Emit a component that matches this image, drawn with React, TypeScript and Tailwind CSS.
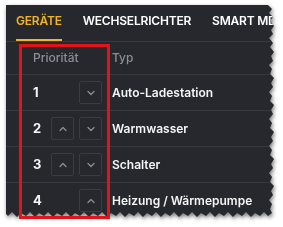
import { ChevronDown, ChevronUp } from "lucide-react";

const rows = [
  { prio: 1, name: "Auto-Ladestation", first: null, second: "down" },
  { prio: 2, name: "Warmwasser", first: "up", second: "down" },
  { prio: 3, name: "Schalter", first: "up", second: "down" },
  { prio: 4, name: "Heizung / Wärmepumpe", first: null, second: "up" },
] as const;

function MoveButton({ dir }: { dir: "up" | "down" }) {
  return (
    <button className="flex h-[23px] w-[23px] items-center justify-center rounded-[2px] border border-[#3a3c42] text-[#8c8f96]">
      {dir === "up" ? <ChevronUp size={12} strokeWidth={2.5} /> : <ChevronDown size={12} strokeWidth={2.5} />}
    </button>
  );
}

export default function App() {
  return (
    <div className="relative h-[227px] w-[283px] overflow-hidden bg-white font-['Inter',sans-serif]">
      <div className="pl-[6px] pt-[5px] drop-shadow-[1px_2px_2px_rgba(0,0,0,0.55)]">
        <div className="h-[213px] w-[270px] overflow-hidden bg-[#26282d] [clip-path:polygon(0_0,262px_0,266px_4px,263px_8px,267px_12px,264px_16px,268px_21px,265px_25px,267px_29px,263px_33px,267px_38px,264px_42px,268px_47px,265px_51px,267px_56px,263px_60px,266px_64px,264px_69px,268px_73px,265px_78px,267px_82px,263px_87px,266px_91px,264px_96px,268px_100px,265px_105px,267px_109px,263px_114px,266px_118px,264px_123px,268px_127px,265px_132px,267px_136px,263px_141px,266px_145px,264px_150px,268px_154px,265px_159px,267px_163px,263px_168px,266px_172px,264px_177px,268px_181px,265px_186px,267px_190px,263px_195px,266px_199px,264px_204px,266px_208px,262px_211px,258px_207px,254px_211px,249px_208px,245px_212px,240px_207px,236px_211px,231px_208px,227px_212px,222px_207px,218px_211px,213px_208px,209px_212px,204px_207px,200px_211px,195px_208px,191px_212px,186px_207px,182px_211px,177px_208px,173px_212px,168px_207px,164px_211px,159px_208px,155px_212px,150px_207px,146px_211px,141px_208px,137px_212px,132px_207px,128px_211px,123px_208px,119px_212px,114px_207px,110px_211px,105px_208px,101px_212px,96px_207px,92px_211px,87px_208px,83px_212px,78px_207px,74px_211px,69px_208px,65px_212px,60px_207px,56px_211px,51px_208px,47px_212px,42px_207px,38px_211px,33px_208px,29px_212px,24px_207px,20px_211px,15px_208px,11px_212px,6px_207px,2px_211px,0_209px)]">
          <div className="flex h-[37px] gap-[21px] whitespace-nowrap border-b border-[#37393f] pl-[10px] text-[12px] font-semibold leading-[14px] tracking-[-0.2px] text-white">
            <div className="flex h-[36px] flex-col justify-between text-[#f2b424]">
              <span className="mt-[9px]">GERÄTE</span>
              <span className="h-[2px] bg-[#f2b424]" />
            </div>
            <div className="h-[36px] pt-[9px]">WECHSELRICHTER</div>
            <div className="h-[36px] pt-[9px]">SMART METER</div>
          </div>
          <div className="flex h-[33px] items-center border-b border-[#37393f] text-[12px] font-medium text-[#8c8f96]">
            <div className="w-[106px] pl-[27px]">Priorität</div>
            <div>Typ</div>
          </div>
          {rows.map((r) => (
            <div key={r.prio} className="flex h-[36px] items-center border-b border-[#37393f] text-[12px] font-semibold text-[#f4f4f5]">
              <div className="flex w-[106px] items-center pl-[27px] text-[13px] font-bold">
                <span className="w-[18px]">{r.prio}</span>
                <div className="w-[28px]">{r.first && <MoveButton dir={r.first} />}</div>
                <div className="w-[28px]">{r.second && <MoveButton dir={r.second} />}</div>
              </div>
              <div className="whitespace-nowrap">{r.name}</div>
            </div>
          ))}
        </div>
      </div>
      <div className="absolute left-[19px] top-[44px] h-[175px] w-[91px] border-[3px] border-[#e3131b]" />
    </div>
  );
}
